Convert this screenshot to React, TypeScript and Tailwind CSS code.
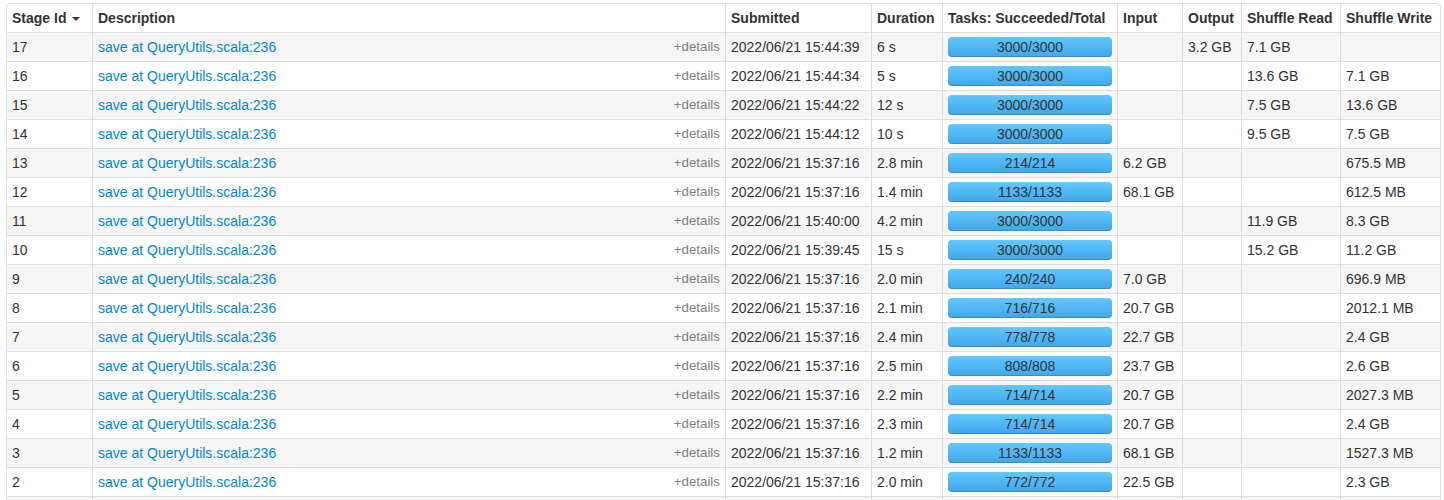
import React from "react";

type Row = {
  id: string;
  submitted: string;
  duration: string;
  tasks: string;
  input: string;
  output: string;
  sread: string;
  swrite: string;
};

const rows: Row[] = [
  { id: "17", submitted: "2022/06/21 15:44:39", duration: "6 s", tasks: "3000/3000", input: "", output: "3.2 GB", sread: "7.1 GB", swrite: "" },
  { id: "16", submitted: "2022/06/21 15:44:34", duration: "5 s", tasks: "3000/3000", input: "", output: "", sread: "13.6 GB", swrite: "7.1 GB" },
  { id: "15", submitted: "2022/06/21 15:44:22", duration: "12 s", tasks: "3000/3000", input: "", output: "", sread: "7.5 GB", swrite: "13.6 GB" },
  { id: "14", submitted: "2022/06/21 15:44:12", duration: "10 s", tasks: "3000/3000", input: "", output: "", sread: "9.5 GB", swrite: "7.5 GB" },
  { id: "13", submitted: "2022/06/21 15:37:16", duration: "2.8 min", tasks: "214/214", input: "6.2 GB", output: "", sread: "", swrite: "675.5 MB" },
  { id: "12", submitted: "2022/06/21 15:37:16", duration: "1.4 min", tasks: "1133/1133", input: "68.1 GB", output: "", sread: "", swrite: "612.5 MB" },
  { id: "11", submitted: "2022/06/21 15:40:00", duration: "4.2 min", tasks: "3000/3000", input: "", output: "", sread: "11.9 GB", swrite: "8.3 GB" },
  { id: "10", submitted: "2022/06/21 15:39:45", duration: "15 s", tasks: "3000/3000", input: "", output: "", sread: "15.2 GB", swrite: "11.2 GB" },
  { id: "9", submitted: "2022/06/21 15:37:16", duration: "2.0 min", tasks: "240/240", input: "7.0 GB", output: "", sread: "", swrite: "696.9 MB" },
  { id: "8", submitted: "2022/06/21 15:37:16", duration: "2.1 min", tasks: "716/716", input: "20.7 GB", output: "", sread: "", swrite: "2012.1 MB" },
  { id: "7", submitted: "2022/06/21 15:37:16", duration: "2.4 min", tasks: "778/778", input: "22.7 GB", output: "", sread: "", swrite: "2.4 GB" },
  { id: "6", submitted: "2022/06/21 15:37:16", duration: "2.5 min", tasks: "808/808", input: "23.7 GB", output: "", sread: "", swrite: "2.6 GB" },
  { id: "5", submitted: "2022/06/21 15:37:16", duration: "2.2 min", tasks: "714/714", input: "20.7 GB", output: "", sread: "", swrite: "2027.3 MB" },
  { id: "4", submitted: "2022/06/21 15:37:16", duration: "2.3 min", tasks: "714/714", input: "20.7 GB", output: "", sread: "", swrite: "2.4 GB" },
  { id: "3", submitted: "2022/06/21 15:37:16", duration: "1.2 min", tasks: "1133/1133", input: "68.1 GB", output: "", sread: "", swrite: "1527.3 MB" },
  { id: "2", submitted: "2022/06/21 15:37:16", duration: "2.0 min", tasks: "772/772", input: "22.5 GB", output: "", sread: "", swrite: "2.3 GB" },
  { id: "1", submitted: "2022/06/21 15:37:16", duration: "1.9 min", tasks: "700/700", input: "20.5 GB", output: "", sread: "", swrite: "2.2 GB" },
];

const grid =
  "grid grid-cols-[85px_633px_146px_71px_175px_65px_59px_99px_100px]";
const cell =
  "h-[28px] px-[5px] py-[4px] leading-[20px] whitespace-nowrap overflow-hidden";
const cellL = cell + " border-l border-[#dddddd]";

export default function App() {
  return (
    <div className="bg-white min-h-[500px] pt-[3px] pl-[6px] font-['Liberation_Sans',Arial,sans-serif] text-[14px] text-[#333333]">
      <div className="w-[1435px] border border-[#dddddd] rounded-t-[4px] overflow-hidden">
        <div className={grid + " font-bold"}>
          <div className={cell + " flex items-center"}>
            <span>Stage Id</span>
            <span className="ml-[6px] mt-[1px] w-0 h-0 border-l-[4px] border-r-[4px] border-t-[4px] border-l-transparent border-r-transparent border-t-[#333333]" />
          </div>
          <div className={cellL}>Description</div>
          <div className={cellL}>Submitted</div>
          <div className={cellL}>Duration</div>
          <div className={cellL}>Tasks: Succeeded/Total</div>
          <div className={cellL}>Input</div>
          <div className={cellL}>Output</div>
          <div className={cellL}>Shuffle Read</div>
          <div className={cellL}>Shuffle Write</div>
        </div>
        {rows.map((r, i) => (
          <div
            key={r.id}
            className={
              grid +
              " h-[29px] border-t border-[#dddddd] " +
              (i % 2 === 0 ? "bg-[#f6f6f6]" : "bg-white")
            }
          >
            <div className={cell}>{r.id}</div>
            <div className={cellL + " flex items-center justify-between"}>
              <span className="text-[#0088cc] leading-[20px]">save at QueryUtils.scala:236</span>
              <span className="text-[13.33px] leading-[20px] text-[#808080]">+details</span>
            </div>
            <div className={cellL}>{r.submitted}</div>
            <div className={cellL}>{r.duration}</div>
            <div className={cellL}>
              <div className="relative h-[20px] rounded-[4px] overflow-hidden bg-linear-to-b from-[#62c8fd] to-[#40a6ea] shadow-[inset_0_-1px_0_rgba(0,0,0,0.15)]">
                <span className="absolute inset-0 text-center leading-[20px] text-[14px] text-[#333333]">
                  {r.tasks}
                </span>
              </div>
            </div>
            <div className={cellL}>{r.input}</div>
            <div className={cellL}>{r.output}</div>
            <div className={cellL}>{r.sread}</div>
            <div className={cellL}>{r.swrite}</div>
          </div>
        ))}
      </div>
    </div>
  );
}
